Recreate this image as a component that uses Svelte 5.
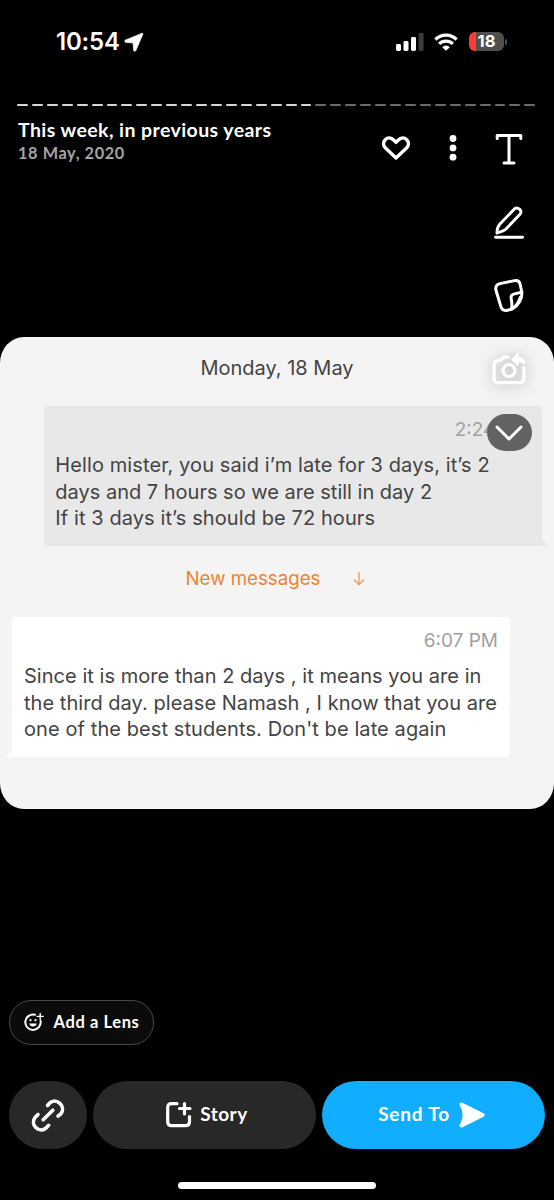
<script>
  const segments = Array.from({ length: 35 }, (_, i) => i < 20);
  const sent = [
    { text: 'Hello mister, you said i’m late for 3 days, it’s 2', spacing: 0.1 },
    { text: 'days and 7 hours so we are still in day 2', spacing: 0 },
    { text: 'If it 3 days it’s should be 72 hours', spacing: 0.09 }
  ];
  const received = [
    { text: 'Since it is more than 2 days , it means you are in', spacing: 0.04 },
    { text: 'the third day. please Namash , I know that you are', spacing: 0.04 },
    { text: "one of the best students. Don't be late again", spacing: 0.09 }
  ];
</script>

<main class="screen">
  <header class="status">
    <div class="clock">
      <span>10:54</span>
      <svg width="20" height="20" viewBox="0 0 20 20"><path d="M18 1.300 1.500 8c-1.200.6-1 2.200.4 2.400l7.100.6.6 7.200c.2 1.400 1.800 1.500 2.300.3L18.900 2.200c.3-.7-.2-1.100-.9-.9Z" fill="#fff" stroke="#fff" stroke-width=".6" /></svg>
    </div>
    <div class="indicators">
      <svg width="28" height="18" viewBox="0 0 28 18" fill="#fff">
        <rect x="0" y="11" width="5" height="7" rx="1.4" />
        <rect x="7.500" y="8" width="5" height="10" rx="1.4" />
        <rect x="15" y="4" width="5" height="14" rx="1.4" />
        <rect x="22.600" y="0" width="5" height="18" rx="1.4" fill="#3b3b3b" />
      </svg>
      <svg class="wifi" width="24" height="18" viewBox="0 0 24 18" fill="none" stroke="#fff" stroke-width="3.300">
        <path d="M1.400 6.500a15.200 15.200 0 0 1 21.200 0" />
        <path d="M5.200 10.900a9.700 9.700 0 0 1 13.600 0" />
        <path d="M12 17.800 8.200 14.200a5.300 5.300 0 0 1 7.600 0Z" fill="#fff" stroke="none" />
      </svg>
      <div class="battery"><span>18</span></div>
      <i class="nub"></i>
    </div>
  </header>

  <div class="segments">
    {#each segments as seen}<i class:seen></i>{/each}
  </div>

  <section class="heading">
    <div class="titles">
      <h1>This week, in previous years</h1>
      <p>18 May, 2020</p>
    </div>
    <svg class="heart" width="30" height="26" viewBox="0 0 30 26" fill="none" stroke="#fff" stroke-width="3.400" stroke-linejoin="round"><path d="M15 23 4.500 13.100C1.900 10.500 2 6.800 4.200 4.700c2.500-2.400 6-2.100 8.400.3L15 7.400l2.400-2.400c2.400-2.400 5.900-2.700 8.400-.3 2.200 2.100 2.300 5.800-.3 8.400Z" /></svg>
    <svg class="dots" width="8" height="26" viewBox="0 0 8 26" fill="#fff"><circle cx="4" cy="3.500" r="3.400" /><circle cx="4" cy="12.900" r="3.400" /><circle cx="4" cy="22.200" r="3.400" /></svg>
  </section>

  <article class="card">
    <h2>Monday, 18 May</h2>
    <div class="bubble sent">
      <time>2:24 PM</time>
      {#each sent as line}<p style:letter-spacing="{line.spacing}px">{line.text}</p>{/each}
      <svg class="tail" width="7" height="8" viewBox="0 0 7 8"><path d="M0 0 7 8H0Z" fill="#e8e8e8" /></svg>
    </div>
    <div class="new">
      <span>New messages</span>
      <svg width="12" height="15" viewBox="0 0 12 15" fill="none" stroke="#ee8c45" stroke-width="1.200"><path d="M6 1v12.500M1 8.700l5 5 5-5" /></svg>
    </div>
    <div class="bubble received">
      <time>6:07 PM</time>
      {#each received as line}<p style:letter-spacing="{line.spacing}px">{line.text}</p>{/each}
      <svg class="tail" width="7" height="8" viewBox="0 0 7 8"><path d="M7 0 0 8H7Z" fill="#fff" /></svg>
    </div>
  </article>

  <nav class="rail">
    <svg width="34" height="34" viewBox="0 0 34 34" fill="none" stroke="#fff" stroke-width="3" stroke-linecap="round" stroke-linejoin="round"><path d="M5.200 6.500V3.600h23.600v2.900M17 3.600v27.400M12 31h10" /></svg>
    <svg width="34" height="36" viewBox="0 0 34 36" fill="none" stroke="#fff" stroke-width="2.900" stroke-linecap="round" stroke-linejoin="round"><path d="M5 28C5 24.500 5.500 22 7.500 19.500L22.400 3.900c3.300-2.800 8.400 1.600 5.600 5.300L14 24C11.500 26.500 8 27 5 28Z" /><path d="M3.500 32.300h27" /></svg>
    <svg width="34" height="36" viewBox="0 0 34 36" fill="none" stroke="#fff" stroke-width="3" stroke-linecap="round" stroke-linejoin="round"><path d="M8 5.600 22.500 2.600c3.200-.6 5 .6 5.600 3.600l1.700 7.700c.6 7.400-3.500 13.800-9.800 17.200l-4.700 1.200c-3.600.7-5.600-.6-6.500-3.900L3.900 12C3.300 8.400 4.600 6.400 8 5.600Z" /><path d="M29.600 14.300 22.500 15.900c-3 .7-3.900 2.200-3.300 5l.5 3.100c.3 2.500.6 4.300-.3 7" /><path d="M28 18.500c-1.200 4-4 8.500-7 11.500" stroke-width="1.600" /></svg>
    <svg class="camera" width="36" height="36" viewBox="0 0 36 36" fill="none" stroke="#fff" stroke-width="3.200" stroke-linecap="round" stroke-linejoin="round"><path d="M17 5.200h-4c-2.500 0-2 3.400-5 3.400-3.600 0-4.900 1.200-4.900 4.200v13.700c0 3 1.300 4.200 4.200 4.200h21.400c3 0 4.200-1.300 4.200-4.200V15.500" /><circle cx="18" cy="18.500" r="6" /><path d="m20.500 7.500 6.500-6v3.500c4.200.2 6.500 2.600 7 7-2.100-1.500-4.300-2-7-1.800v3.500Z" fill="#fff" stroke-width="1" /></svg>
    <div class="collapse"><svg width="28" height="16" viewBox="0 0 28 16" fill="none" stroke="#fff" stroke-width="3" stroke-linecap="round" stroke-linejoin="round"><path d="m2 2 12 12L26 2" /></svg></div>
  </nav>

  <footer class="actions">
    <button class="lens">
      <svg width="20" height="20" viewBox="0 0 20 20" fill="none" stroke="#fff" stroke-width="2" stroke-linecap="round"><path d="M11 2.800A7.700 7.700 0 1 0 16.600 9" /><path d="M16.200 1.400v6M13.200 4.400h6" stroke-width="1.400" /><path d="M5.300 11.500h7.400c-.4 4-7 4-7.400 0Z" fill="#fff" stroke="none" /><circle cx="6.500" cy="8.200" r="1.100" fill="#fff" stroke="none" /><circle cx="11.500" cy="8.200" r="1.100" fill="#fff" stroke="none" /></svg>
      <span>Add a Lens</span>
    </button>
    <div class="buttons">
      <button class="link">
        <svg width="36" height="36" viewBox="0 0 36 36" fill="none" stroke="#fff" stroke-width="3.600" stroke-linecap="round"><path d="M17.500 8.500 19.500 6.200c7-6.400 17.300 3.600 11.200 10.800L28 19.200M8 17.500 5.300 20.200c-6 7.200 3.700 16.700 10.800 10.800l2.600-2.700M13.200 22.700 22.800 13.200" /></svg>
      </button>
      <button class="story">
        <svg width="27" height="27" viewBox="0 0 27 27" fill="none" stroke="#fff" stroke-width="3.200" stroke-linecap="round"><path d="M12 2.700H6.500C3.700 2.700 2.700 3.900 2.700 6.700v14c0 2.800 1.200 4 4 4h13.800c2.800 0 4-1.200 4-4v-5.200M19.500 2.500v10.500M14.500 7.500h10.500" /></svg>
        <span>Story</span>
      </button>
      <button class="send">
        <span>Send To</span>
        <svg width="26" height="26" viewBox="0 0 26 26" fill="#fff"><path d="M3.500.8 24.500 11.200c1.500.9 1.500 2.500 0 3.500L3.500 25.200C1.500 26-.2 24.500.7 22.500 4.500 16.500 4.500 9.500.7 3.500-.2 1.500 1.500 0 3.500.8Z" /></svg>
      </button>
    </div>
    <i class="home"></i>
  </footer>
</main>

<style>
  :global(body) { background: #000; }
  .screen { position: relative; box-sizing: border-box; width: 554px; height: 1200px; overflow: hidden; display: flex; flex-direction: column; background: #000; color: #fff; font-family: Inter, "Liberation Sans", sans-serif; }
  h1, h2, p { margin: 0; font-weight: 400; }
  svg { display: block; flex: none; }
  i { display: block; }
  span, h1, p, time { white-space: pre; }

  .status { height: 84px; box-sizing: border-box; padding: 0 47px 1px 56px; display: flex; align-items: center; justify-content: space-between; }
  .clock { display: flex; align-items: center; gap: 4.500px; font-weight: 600; font-size: 24px; letter-spacing: -.2px; }
  .indicators { display: flex; align-items: center; }
  .wifi { margin: 0 11px 0 10px; }
  .battery { width: 35px; height: 19px; border-radius: 6px; background: linear-gradient(90deg, #fc3b33 0 7px, #4f4f4f 7px); font-size: 16.500px; font-weight: 700; line-height: 19px; text-align: center; }
  .nub { width: 2px; height: 6px; margin-left: 1px; border-radius: 0 2px 2px 0; background: #4f4f4f; }

  .segments { height: 2px; margin: 20px 18.500px 0 17px; display: flex; gap: 4px; }
  .segments i { flex: 1; background: #6b6b6b; border-radius: 1px; }
  .segments .seen { background: #d8d8d8; }

  .heading { height: 231px; display: flex; align-items: flex-start; padding: 0 97px 0 18px; font-family: Lato, sans-serif; }
  .titles { flex: 1; padding-top: 12px; }
  h1 { font-size: 19.500px; line-height: 24px; font-weight: 700; letter-spacing: .42px; }
  .titles p { font-size: 16.300px; line-height: 22px; font-weight: 700; letter-spacing: .6px; color: #a4a4a4; }
  .heart { margin: 29px 38px 0 0; }
  .dots { margin-top: 29px; }

  .card { height: 472px; box-sizing: border-box; border-radius: 24px / 26px; background: #f4f4f4; color: #434343; font-size: 20px; display: flex; flex-direction: column; }
  h2 { padding-top: 18px; height: 51px; font-size: 20px; line-height: 26px; text-align: center; }
  .bubble { position: relative; box-sizing: border-box; width: 498px; height: 140px; padding: 10px 12px 0; border-radius: 4px; line-height: 26.600px; }
  .sent { margin-left: 44px; padding-left: 11.300px; background: #e8e8e8; }
  .received { margin-left: 12px; background: #fff; }
  .bubble p { height: 26.600px; }
  time { display: block; height: 36px; text-align: right; font-size: 19px; color: #a0a0a0; line-height: 28px; }
  .tail { position: absolute; bottom: 0; }
  .sent .tail { left: 497px; }
  .received .tail { right: 497px; }
  .new { height: 71px; box-sizing: border-box; padding: 0 189px 7px 185.500px; display: flex; align-items: center; justify-content: space-between; font-size: 18.700px; color: #ee8432; }

  .rail { position: absolute; top: 132px; left: 486px; width: 46px; display: flex; flex-direction: column; align-items: center; }
  .rail svg:nth-child(2) { margin-top: 39px; }
  .rail svg:nth-child(3) { margin-top: 37px; }
  .rail .camera { margin-top: 38px; filter: drop-shadow(0 1px 7px rgba(0, 0, 0, .3)); }
  .collapse { margin-top: 26px; width: 45px; height: 37px; border-radius: 19px; background: #626262; display: grid; place-items: center; }

  button { all: unset; box-sizing: border-box; display: flex; align-items: center; justify-content: center; font-family: Lato, sans-serif; font-weight: 700; }
  .actions { margin-top: auto; height: 200px; padding: 0 9px; }
  .lens { width: 145px; height: 45px; padding-bottom: 2px; border: 1px solid #484848; border-radius: 22px; background: #0b0b0b; gap: 10px; font-size: 16.500px; letter-spacing: .6px; }
  .buttons { margin-top: 36px; display: flex; gap: 6px; height: 68px; }
  .link { width: 78px; border-radius: 34px; background: #282828; }
  .story { width: 223px; border-radius: 34px; background: #282828; gap: 8px; padding: 0 0 1px 4px; font-size: 19px; letter-spacing: .45px; }
  .send { width: 223px; border-radius: 34px; background: #11adff; gap: 9px; padding: 0 4px 1px 0; font-size: 19px; letter-spacing: .8px; }
  .story span, .send span { margin-top: -2px; }
  .home { width: 198px; height: 7px; border-radius: 4px; background: #fff; margin: 32.500px auto 0; }
</style>
